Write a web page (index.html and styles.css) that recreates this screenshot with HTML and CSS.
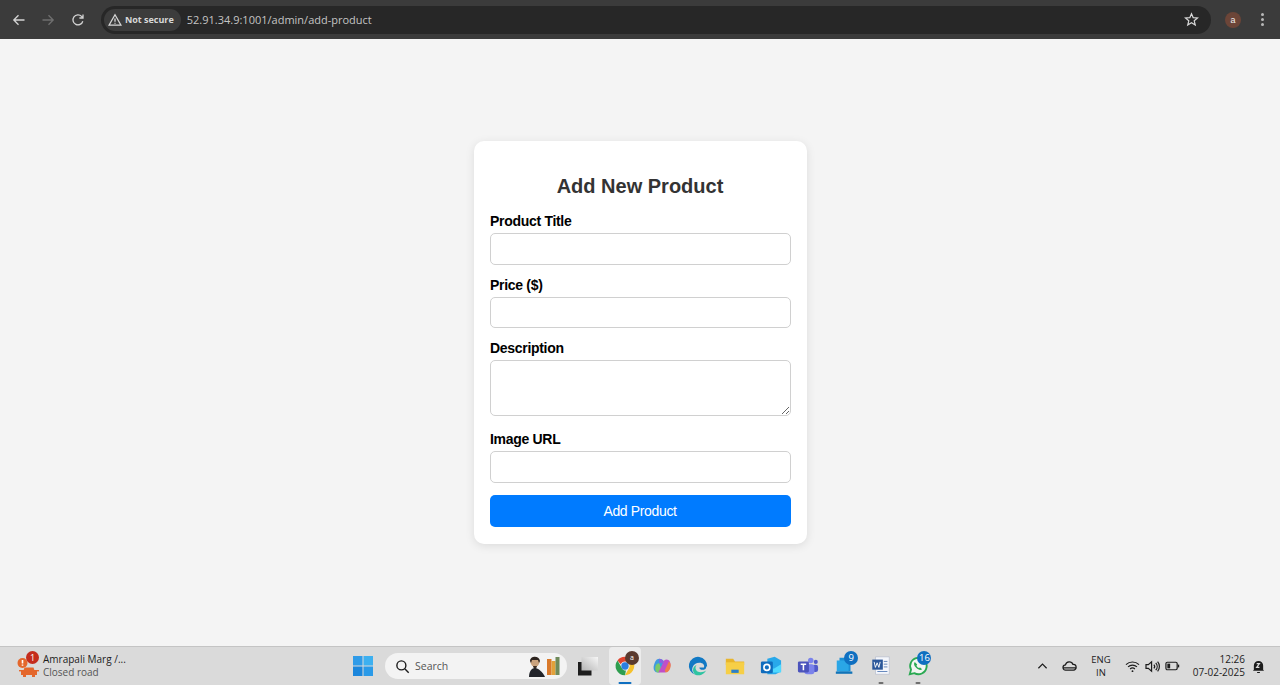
FILE: index.html
```html
<!DOCTYPE html>
<html lang="en">
<head>
    <meta charset="UTF-8">
    <meta name="viewport" content="width=device-width, initial-scale=1.0">
    <title>Add Product</title>
    <link rel="stylesheet" href="styles.css">
</head>

<body>

    <!-- Browser toolbar -->
    <div class="toolbar">
        <svg class="nav-icon" viewBox="0 0 14 14"><path d="M12.5 7H2M6.5 2.2 1.8 7l4.7 4.8" stroke="#d4d4d4"/></svg>
        <svg class="nav-icon" viewBox="0 0 14 14"><path d="M1.5 7H12M7.5 2.2 12.2 7l-4.7 4.8" stroke="#6f6f6f"/></svg>
        <svg class="nav-icon" viewBox="0 0 14 14"><path d="M11.8 8.2A5 5 0 1 1 10.6 3.4L12 4.8M12 1.4v3.6H8.4" stroke="#d4d4d4"/></svg>
        <div class="omnibox">
            <div class="security-chip">
                <svg class="warn-icon" viewBox="0 0 14 14"><path d="M7 1.8 13 12.2H1zM7 5.6v3.2M7 9.8v1" stroke="#d8d8d8"/></svg>
                <span>Not secure</span>
            </div>
            <span class="url">52.91.34.9:1001/admin/add-product</span>
            <svg class="star-icon" viewBox="0 0 16 16"><path d="M8 1.800 9.800 6l4.600.4-3.500 3 1.100 4.500L8 11.500l-4 2.400 1.100-4.500-3.500-3L6.200 6z" stroke="#d8d8d8"/></svg>
        </div>
        <div class="avatar">a</div>
        <div class="kebab"><i></i><i></i><i></i></div>
    </div>

    <!-- Add product form -->
    <main class="page">
        <form class="card">
            <h2>Add New Product</h2>
            <label for="title">Product Title</label>
            <input type="text" id="title">
            <label for="price">Price ($)</label>
            <input type="text" id="price">
            <label for="description">Description</label>
            <textarea id="description"></textarea>
            <label for="image">Image URL</label>
            <input type="text" id="image">
            <button type="button">Add Product</button>
        </form>
    </main>

    <!-- Windows taskbar -->
    <footer class="taskbar">
        <div class="widget">
            <div class="widget-icon">
                <svg viewBox="0 0 24 24" width="24" height="24">
                    <circle cx="6.500" cy="9" r="5" fill="#e4672c"/>
                    <path d="M6.500 6v3.400M6.500 10.600v1.200" stroke="#fff" stroke-width="1.600" fill="none"/>
                    <path d="M5 16.500h16v4.500H5zM7.500 16.500l1-3h9l1 3" fill="#e4672c"/>
                    <rect x="7" y="21" width="3" height="2" fill="#e4672c"/>
                    <rect x="16" y="21" width="3" height="2" fill="#e4672c"/>
                    <rect x="3" y="16" width="20" height="1.400" fill="#e4672c"/>
                </svg>
                <span class="badge-red">1</span>
            </div>
            <div class="widget-text">
                <span class="widget-title">Amrapali Marg /...</span>
                <span class="widget-sub">Closed road</span>
            </div>
        </div>

        <div class="task-center">
            <svg class="win-logo" viewBox="0 0 20 20">
                <rect x="0" y="0" width="9.500" height="9.500" fill="#2f9be8"/>
                <rect x="10.500" y="0" width="9.500" height="9.500" fill="#3db0f0"/>
                <rect x="0" y="10.500" width="9.500" height="9.500" fill="#1b86dc"/>
                <rect x="10.500" y="10.500" width="9.500" height="9.500" fill="#2a9ae8"/>
            </svg>
            <div class="search">
                <svg class="search-icon" viewBox="0 0 16 16"><circle cx="6.800" cy="6.800" r="4.800" stroke="#1c1c1c"/><path d="m10.400 10.400 4.200 4.200" stroke="#1c1c1c"/></svg>
                <span>Search</span>
                <svg class="search-art" viewBox="0 0 36 22">
                    <circle cx="9" cy="7" r="4.500" fill="#c9a27d"/>
                    <path d="M4 6c0-5 9-6 10 0l-1 2-1-3H6l-1 3z" fill="#2e2520"/>
                    <path d="M7 11h4l-1 3H8z" fill="#3b2c22"/>
                    <path d="M3 22c0-6 3-9 6-9s8 4 10 9z" fill="#22242a"/>
                    <rect x="21" y="4" width="4.500" height="16" fill="#d9792a"/>
                    <rect x="25.500" y="6" width="4" height="14" fill="#e2a13a"/>
                    <rect x="29.500" y="2" width="4" height="18" fill="#6f8a5a"/>
                </svg>
            </div>
            <svg class="taskview" viewBox="0 0 20 19">
                <defs>
                    <linearGradient id="taskviewFront" x1="1" y1="0" x2="0" y2="1">
                        <stop offset="0" stop-color="#f6f6f6"/>
                        <stop offset="1" stop-color="#b4b4b4"/>
                    </linearGradient>
                </defs>
                <rect x="0" y="5" width="13.500" height="13.500" fill="#1d1d1d"/>
                <rect x="3.500" y="0" width="16.500" height="13.500" fill="url(#taskviewFront)"/>
            </svg>
            <div class="task-icon active">
                <svg viewBox="0 0 24 24">
                    <path d="M12 2a10 10 0 0 1 8.700 5H12a5 5 0 0 0-4.700 3.200L3.800 6A10 10 0 0 1 12 2z" fill="#e0452f"/>
                    <path d="M20.700 7A10 10 0 0 1 12 22l4.300-7.500A5 5 0 0 0 16.300 9z" fill="#f6c22d"/>
                    <path d="M12 22A10 10 0 0 1 3.800 6l4.400 7.600A5 5 0 0 0 13 17z" fill="#2f9e4f"/>
                    <circle cx="12" cy="12" r="4" fill="#2c7fe0"/>
                </svg>
                <span class="badge-brown">a</span>
                <span class="running blue"></span>
            </div>
            <div class="task-icon">
                <svg viewBox="0 0 24 24">
                    <path d="M9 4c-3 0-5 3-6 8-.7 4 1 7 4 7 2 0 3-1 4-3l3-9c-1-2-3-3-5-3z" fill="#3f9ae0"/>
                    <path d="M5 12c-1 4 0 7 3 7 2 0 3-1 3.500-3L9 9c-2 0-3.300 1-4 3z" fill="#7bc96a"/>
                    <path d="M8 19h7c3 0 5-3 6-7 .7-4-1-7-4-7-2 0-3 1-3.500 3z" fill="#c04fc8"/>
                    <path d="M16 19c3 0 5-3 5.500-7 .3-2-.5-4-2-5L15 17z" fill="#ef7b4c"/>
                    <path d="M9 4c2 0 4 1 5 3l-1 3c-1-1-3-2-4-1z" fill="#8a62e0"/>
                </svg>
            </div>
            <div class="task-icon">
                <svg viewBox="0 0 24 24">
                    <path d="M22 12.500A10 10 0 1 0 9 21.500c-3-2-4-5-3-8 1-3 4-5 7.500-5 4 0 6 2.500 5 5h-5c0 2 2 3 5 2.500 1.500-.3 2.500-1.500 2.500-3.500z" fill="#1279c4"/>
                    <path d="M9 21.500A10 10 0 0 0 21 17c-3 2-7 2.500-9.500 1C9 16.500 8.500 13 10.500 11 7 12 4.500 17 9 21.500z" fill="#2fc4a2"/>
                </svg>
            </div>
            <div class="task-icon">
                <svg viewBox="0 0 24 24">
                    <path d="M2 4h8l2 3h10v4H2z" fill="#e8b52c"/>
                    <rect x="2" y="8" width="20" height="13" fill="#f6cf47"/>
                    <rect x="8" y="16" width="8" height="3.500" fill="#2b7fc9"/>
                </svg>
            </div>
            <div class="task-icon">
                <svg viewBox="0 0 24 24">
                    <path d="M8 4l8-2 7 4v12l-6 3H8z" fill="#28a8ea"/>
                    <path d="M8 11l7 4 8-5v9H8z" fill="#50d9ff"/>
                    <rect x="1" y="7" width="13" height="13" rx="1.500" fill="#0f6cbd"/>
                    <circle cx="7.500" cy="13.500" r="3.200" fill="none" stroke="#fff" stroke-width="1.800"/>
                </svg>
            </div>
            <div class="task-icon">
                <svg viewBox="0 0 24 24">
                    <circle cx="15" cy="6" r="3" fill="#7b83eb"/>
                    <circle cx="20.500" cy="7.500" r="2.200" fill="#5059c9"/>
                    <rect x="17" y="10.500" width="6" height="8" rx="2.500" fill="#5059c9"/>
                    <rect x="8" y="10" width="11" height="11" rx="3" fill="#7b83eb"/>
                    <rect x="1" y="7" width="12" height="12" rx="1.500" fill="#4b53bc"/>
                    <path d="M4 10h6M7 10v6.500" stroke="#fff" stroke-width="1.700" fill="none"/>
                </svg>
            </div>
            <div class="task-icon">
                <svg viewBox="0 0 24 24">
                    <path d="M6 3h12v15H6z" fill="#1a8fd6"/>
                    <path d="M3 6h13v12H3z" fill="#2aa6e6"/>
                    <rect x="2" y="18" width="18" height="2.500" fill="#1274b8"/>
                </svg>
                <span class="badge-blue">9</span>
            </div>
            <div class="task-icon">
                <svg viewBox="0 0 24 24">
                    <path d="M6 2h15v19H6z" fill="#f4f6fb" stroke="#aab2c6" stroke-width=".6"/>
                    <rect x="2.500" y="5" width="11.500" height="11" fill="#2b579a"/>
                    <path d="M4.500 7.500l1.400 6 1.900-5 1.900 5 1.400-6" stroke="#fff" stroke-width="1" fill="none"/>
                    <path d="M15 7h4M15 10h4M15 13h4M8 18h11" stroke="#5b7fb8" stroke-width="1" fill="none"/>
                </svg>
                <span class="running gray"></span>
            </div>
            <div class="task-icon">
                <svg viewBox="0 0 24 24">
                    <path d="M3 21l1.400-5A9 9 0 1 1 8 19.800z" fill="#f2f5f2" stroke="#2aa952" stroke-width="2"/>
                    <path d="M8.500 7.500c-1.500 1.500-1 4 1.500 6.500s5 3 6.500 1.500l-2.200-2-1.300.8c-1.200-.6-2-1.500-2.700-2.700l.8-1.300z" fill="#2aa952"/>
                </svg>
                <span class="badge-blue">16</span>
                <span class="running gray"></span>
            </div>
        </div>

        <div class="tray">
            <svg class="tray-chevron" viewBox="0 0 12 8"><path d="M1.500 6.500 6 2l4.500 4.500" stroke="#1c1c1c"/></svg>
            <svg class="tray-cloud" viewBox="0 0 16 12"><path d="M4 10.500a2.800 2.800 0 0 1-.3-5.600 4.200 4.200 0 0 1 8-.6 3.100 3.100 0 0 1 .6 6.200zM1.500 8h13" stroke="#1c1c1c"/></svg>
            <div class="lang"><span>ENG</span><span>IN</span></div>
            <svg class="tray-wifi" viewBox="0 0 16 14"><path d="M1 5a10 10 0 0 1 14 0M3.200 7.400a7 7 0 0 1 9.600 0M5.400 9.700a4 4 0 0 1 5.200 0" stroke="#1c1c1c"/><circle cx="8" cy="12" r="1" fill="#1c1c1c"/></svg>
            <svg class="tray-sound" viewBox="0 0 16 14"><path d="M1 5h2.500L7 2v10L3.500 9H1zM9.500 5a3 3 0 0 1 0 4M11.500 3a6 6 0 0 1 0 8M13.500 1.800a8 8 0 0 1 0 10.400" stroke="#1c1c1c"/></svg>
            <svg class="tray-battery" viewBox="0 0 16 10"><rect x="1" y="1" width="12" height="8" rx="1.500" stroke="#1c1c1c"/><rect x="2.500" y="2.500" width="3" height="5" fill="#1c1c1c"/><path d="M14.500 3.500v3" stroke="#1c1c1c"/></svg>
            <div class="clock"><span>12:26</span><span>07-02-2025</span></div>
            <svg class="tray-bell" viewBox="0 0 14 16"><path d="M2 11.500V7a5 5 0 0 1 10 0v4.500l1 1H1zM5.500 14h3v1h-3z" fill="#1c1c1c"/><path d="M5 5h3L5 9h3" stroke="#ddd" fill="none"/></svg>
        </div>
    </footer>

</body>
</html>
```

FILE: styles.css
```css
body {
    font-family: "Liberation Sans", Arial, Helvetica, sans-serif;
    margin: 0;
    height: 685px;
    background-color: #f4f4f4;
    overflow: hidden;
    display: flex;
    flex-direction: column;
}

svg {
    fill: none;
    stroke-width: 1.300;
    display: block;
    flex: none;
}

/* Browser toolbar */
.toolbar {
    height: 39px;
    flex: none;
    box-sizing: border-box;
    padding: 4px 0 4px 11.500px;
    background-color: #3b3b3b;
    display: flex;
    align-items: center;
    color: #d8d8d8;
}

.nav-icon {
    width: 14px;
    height: 14px;
    margin-right: 15.800px;
}

.omnibox {
    width: 1110px;
    height: 28px;
    padding: 0 12px 0 3px;
    box-sizing: border-box;
    border-radius: 14px;
    background-color: #272727;
    display: flex;
    align-items: center;
}

.security-chip {
    height: 22px;
    padding: 0 7px 0 4px;
    border-radius: 11px;
    background-color: #3c3c3c;
    display: flex;
    align-items: center;
    gap: 3px;
    font-size: 9px;
    font-weight: bold;
    font-family: "Open Sans", sans-serif;
    color: #d8d8d8;
}

.warn-icon {
    width: 14px;
    height: 14px;
}

.url {
    margin-left: 6px;
    flex: 1;
    font-family: "Open Sans", sans-serif;
    font-size: 11px;
    color: #c4c4c4;
}

.star-icon {
    width: 15px;
    height: 15px;
}

.avatar {
    width: 16px;
    height: 16px;
    margin-left: 14px;
    border-radius: 50%;
    background-color: #6c4538;
    color: #eee;
    font-size: 9px;
    line-height: 16px;
    text-align: center;
}

.kebab {
    margin-left: 20px;
    display: flex;
    flex-direction: column;
    gap: 2px;
}

.kebab i {
    width: 3px;
    height: 3px;
    border-radius: 50%;
    background-color: #b8b8b8;
}

/* Form */
.page {
    flex: 1;
    display: flex;
    justify-content: center;
    padding-top: 102px;
}

.card {
    width: 333px;
    height: 403px;
    box-sizing: border-box;
    padding: 33px 16px 0;
    background-color: #fff;
    border-radius: 10px;
    box-shadow: 0 2px 10px rgba(0, 0, 0, 0.1);
    display: flex;
    flex-direction: column;
}

.card h2 {
    margin: 0 0 15px;
    font-size: 20px;
    line-height: 24px;
    text-align: center;
    color: #333;
}

.card label {
    font-size: 14px;
    letter-spacing: -0.300px;
    font-weight: bold;
    line-height: 16px;
    margin-bottom: 4px;
    padding-left: 0.500px;
    color: #000;
}

.card input,
.card textarea {
    box-sizing: border-box;
    width: 100%;
    height: 31.700px;
    margin: 0 0 12px;
    border: 1px solid #d0d0d0;
    border-radius: 5px;
    background-color: #fff;
    display: block;
}

.card textarea {
    height: 56px;
    margin-bottom: 15px;
}

.card button {
    height: 32px;
    padding-bottom: 2px;
    border: none;
    border-radius: 5px;
    background-color: #007bff;
    color: #fff;
    font-family: inherit;
    font-size: 14px;
    letter-spacing: -0.350px;
}

/* Taskbar */
.taskbar {
    height: 39px;
    flex: none;
    box-sizing: border-box;
    border-top: 1px solid #c4c4c4;
    background-color: #dadada;
    display: flex;
    align-items: center;
    color: #1c1c1c;
    font-family: "Open Sans", sans-serif;
}

.widget {
    width: 346px;
    flex: none;
    box-sizing: border-box;
    padding-left: 16px;
    display: flex;
    align-items: center;
    gap: 3px;
}

.widget-icon {
    position: relative;
    width: 24px;
    height: 24px;
}

.badge-red {
    position: absolute;
    top: -3px;
    left: 10px;
    width: 13px;
    height: 13px;
    border-radius: 50%;
    background-color: #c42b1c;
    color: #fff;
    font-size: 9px;
    line-height: 13px;
    text-align: center;
}

.widget-text {
    display: flex;
    flex-direction: column;
    font-size: 10px;
    line-height: 13px;
}

.widget-sub {
    color: #555;
}

.task-center {
    width: 590px;
    flex: none;
    display: flex;
    align-items: center;
}

.win-logo {
    width: 20px;
    height: 20px;
    margin-left: 7px;
}

.search {
    width: 182px;
    height: 26px;
    margin-left: 12px;
    box-sizing: border-box;
    padding: 0 5px 0 10px;
    border-radius: 13px;
    background-color: #f3f3f3;
    display: flex;
    align-items: center;
    font-size: 10.500px;
    color: #555;
}

.search-icon {
    width: 15px;
    height: 15px;
    stroke-width: 1.500;
    margin-right: 5px;
}

.search-art {
    width: 36px;
    height: 22px;
    margin-left: auto;
}

.taskview {
    width: 20px;
    height: 19px;
    margin-left: 11px;
    margin-right: 9px;
}

.task-icon {
    position: relative;
    width: 36.600px;
    height: 38px;
    display: flex;
    align-items: center;
    justify-content: center;
}

.task-icon svg {
    width: 22px;
    height: 22px;
}

.task-icon.active {
    width: 32.600px;
    margin: 0 2px;
    background-color: #ececec;
    border-radius: 4px;
}

.badge-brown,
.badge-blue {
    position: absolute;
    top: 4px;
    border-radius: 7px;
    color: #fff;
    font-size: 9.500px;
    line-height: 14px;
    height: 14px;
    min-width: 14px;
    text-align: center;
}

.badge-brown {
    left: 16px;
    background-color: #5a3a2e;
    font-size: 7px;
}

.badge-blue {
    left: 18px;
    background-color: #0f6fc0;
}

.running {
    position: absolute;
    bottom: 1px;
    left: 50%;
    transform: translateX(-50%);
    height: 2px;
    border-radius: 1px;
}

.running.blue {
    width: 13px;
    background-color: #0f6fc0;
}

.running.gray {
    width: 5px;
    background-color: #6e6e6e;
}

.tray {
    flex: 1;
    display: flex;
    align-items: center;
    font-size: 10px;
}

.tray-chevron {
    width: 11px;
    height: 8px;
    margin-left: 101px;
}

.tray-cloud {
    width: 15px;
    height: 12px;
    margin-left: 14px;
}

.lang {
    width: 24px;
    margin-left: 12px;
    display: flex;
    flex-direction: column;
    align-items: center;
    line-height: 13px;
    font-size: 9.500px;
}

.tray-wifi {
    width: 15px;
    height: 13px;
    margin-left: 12px;
}

.tray-sound {
    width: 15px;
    height: 13px;
    margin-left: 5px;
}

.tray-battery {
    width: 15px;
    height: 10px;
    margin-left: 5px;
}

.clock {
    margin-left: 11px;
    width: 54px;
    display: flex;
    flex-direction: column;
    align-items: flex-end;
    line-height: 13px;
    white-space: nowrap;
}

.tray-bell {
    width: 13px;
    height: 15px;
    margin-left: 7px;
}
```
